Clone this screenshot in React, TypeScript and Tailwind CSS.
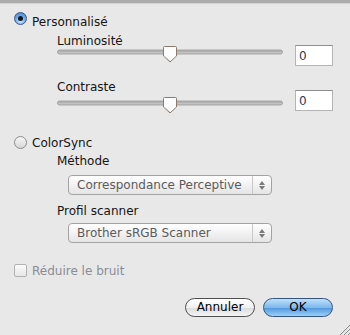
import React from "react";

// small aqua-style controls, drawn with css + svg

function Radio({ checked }: { checked?: boolean }) {
  if (checked) {
    return (
      <div className="w-[13px] h-[13px] rounded-full border border-[#35598a] bg-[radial-gradient(circle_at_50%_75%,#cfe8ff_0%,#79b0e8_45%,#3f7cc4_100%)] flex items-center justify-center shrink-0">
        <div className="w-[5px] h-[5px] rounded-full bg-[#101820]" />
      </div>
    );
  }
  return (
    <div className="w-[13px] h-[13px] rounded-full border border-[#8c8c8c] bg-[linear-gradient(#f8f8f8,#d6d6d6)] shrink-0" />
  );
}

function Slider() {
  // track plus downward pointing thumb
  return (
    <svg width="226" height="17" viewBox="0 0 226 17" className="block">
      <rect x="0.5" y="4" width="225" height="4" rx="2" fill="#c2c2c2" stroke="#979797" strokeWidth="0.8" />
      <rect x="1.5" y="4.6" width="223" height="1" fill="#8e8e8e" opacity="0.5" />
      <path d="M106.5 1.5 Q106.5 0.5 107.5 0.5 L118.5 0.5 Q119.5 0.5 119.5 1.5 L119.5 10 L113 16 L106.5 10 Z" fill="#fdfdfd" stroke="#8a7a70" strokeWidth="1" />
      <path d="M107.5 10 L113 15" stroke="#cfcfcf" strokeWidth="1" />
    </svg>
  );
}

function NumberBox() {
  return (
    <div className="ml-auto w-[38px] h-[21px] bg-white border border-[#b4b4b4] border-t-[#8f8f8f] flex items-center pl-[3px] text-[12px] text-[#2a3a55]">
      0
    </div>
  );
}

function Select({ label }: { label: string }) {
  return (
    <div className="w-[204px] h-[20px] rounded-[4px] border border-[#a3a3a3] bg-[linear-gradient(#ffffff,#efefef_60%,#e4e4e4)] flex items-center text-[12px] text-[#5b5b5b]">
      <span className="pl-[8px] flex-1">{label}</span>
      <div className="w-[19px] h-full border-l border-[#c9c9c9] flex flex-col items-center justify-center gap-[1px]">
        <svg width="6" height="4" viewBox="0 0 6 4"><path d="M3 0 L6 4 L0 4 Z" fill="#7a7a7a" /></svg>
        <svg width="6" height="4" viewBox="0 0 6 4"><path d="M0 0 L6 0 L3 4 Z" fill="#7a7a7a" /></svg>
      </div>
    </div>
  );
}

export default function App() {
  return (
    <div className="relative w-[350px] h-[335px] overflow-hidden bg-[#e8e8e8] font-['DejaVu_Sans',sans-serif] text-[12px] text-[#141414]">
      <div className="h-[3px] bg-[#acacac]" />
      <div className="h-px bg-[#d4d4d4]" />
      <div className="pl-[14px] pr-[17px]">
        <div className="mt-[10px] h-[16px] leading-[16px] flex items-start">
          <div className="mt-[-2px]"><Radio checked /></div>
          <span className="ml-[5px]">Personnalisé</span>
        </div>

        <div className="mt-[3px] h-[16px] leading-[16px] pl-[43px]">Luminosité</div>
        <div className="mt-[-4px] h-[21px] flex items-start">
          <div className="ml-[43px] mt-[1px]"><Slider /></div>
          <NumberBox />
        </div>

        <div className="mt-[13px] h-[16px] leading-[16px] pl-[43px]">Contraste</div>
        <div className="mt-[-5px] h-[21px] flex items-start">
          <div className="ml-[43px] mt-[7px]"><Slider /></div>
          <NumberBox />
        </div>

        <div className="mt-[24px] h-[16px] leading-[16px] flex items-start">
          <div className="mt-[1px]"><Radio /></div>
          <span className="ml-[5px]">ColorSync</span>
        </div>
        <div className="mt-[2px] h-[16px] leading-[16px] pl-[43px]">Méthode</div>
        <div className="mt-[6px] pl-[54px]">
          <Select label="Correspondance Perceptive" />
        </div>
        <div className="mt-[8px] h-[16px] leading-[16px] pl-[43px]">Profil scanner</div>
        <div className="mt-[4px] pl-[54px]">
          <Select label="Brother sRGB Scanner" />
        </div>

        <div className="mt-[20px] h-[16px] leading-[16px] flex items-start">
          <div className="mt-[1px] w-[13px] h-[13px] rounded-[2px] border border-[#b2b2b2] bg-[linear-gradient(#fbfbfb,#e6e6e6)]" />
          <span className="ml-[5px] text-[#8a8d94]">Réduire le bruit</span>
        </div>

        <div className="mt-[19px] flex justify-end gap-[8px]">
          <button className="w-[70px] h-[19px] rounded-full border border-[#4e4e4e] bg-[linear-gradient(#ffffff,#f0f0f0_50%,#dcdcdc_51%,#f4f4f4)] text-[12px] leading-[17px] text-black">
            Annuler
          </button>
          <button className="w-[70px] h-[19px] rounded-full border border-[#35557e] bg-[linear-gradient(#bfe0fb,#7fb8ec_50%,#4e95dc_51%,#9bd0fa)] text-[12px] leading-[17px] text-black">
            OK
          </button>
        </div>
      </div>

      {/* resize grip */}
      <svg width="11" height="11" viewBox="0 0 11 11" className="absolute right-0 bottom-0">
        <path d="M11 1 L1 11 M11 5 L5 11 M11 9 L9 11" stroke="#8a8a8a" strokeWidth="1" />
      </svg>
    </div>
  );
}
